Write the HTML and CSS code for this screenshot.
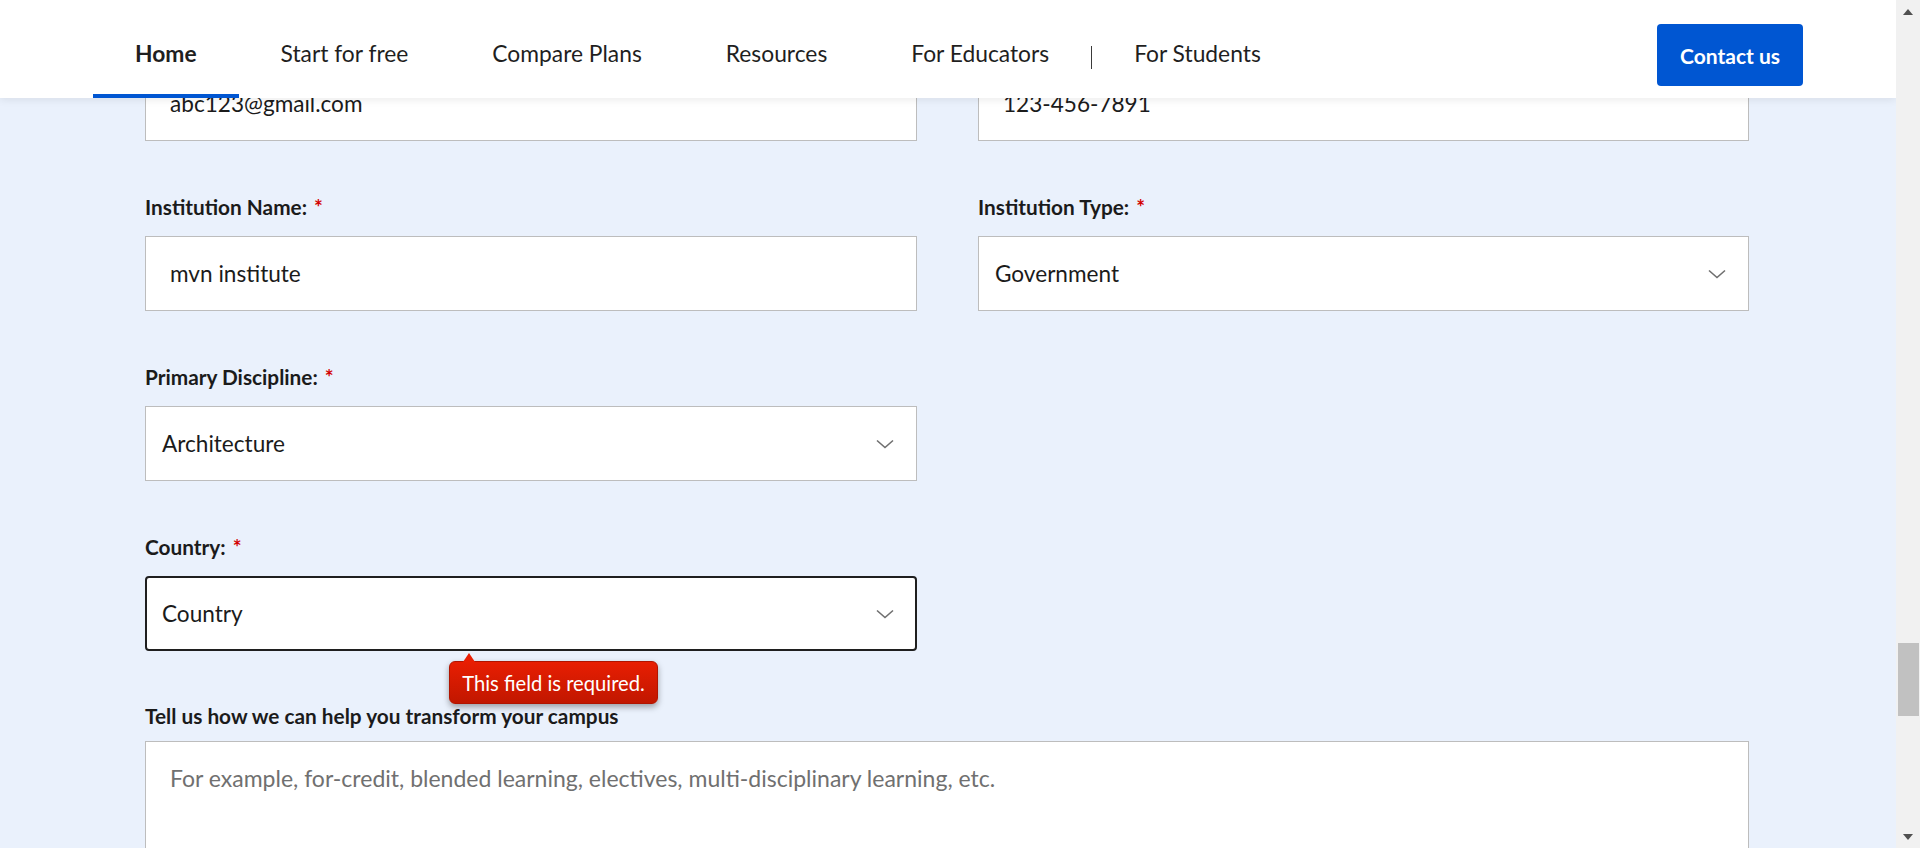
FILE: index.html
```html
<!DOCTYPE html>
<html lang="en">
<head>
<meta charset="utf-8">
<title>Contact us</title>
<link rel="stylesheet" href="styles.css">
</head>
<body>
<div class="page">
  <div class="viewport">
    <header class="topbar">
      <nav class="nav">
        <a class="nav-item active" href="#">Home</a>
        <a class="nav-item" href="#">Start for free</a>
        <a class="nav-item" href="#">Compare Plans</a>
        <a class="nav-item" href="#">Resources</a>
        <a class="nav-item" href="#">For Educators</a>
        <span class="nav-sep"></span>
        <a class="nav-item" href="#">For Students</a>
      </nav>
      <a class="btn-contact" href="#">Contact us</a>
    </header>

    <main class="content">
      <form class="form-grid">
        <div class="field">
          <div class="control text-control">abc123@gmail.com</div>
        </div>
        <div class="field">
          <div class="control text-control">123-456-7891</div>
        </div>

        <div class="field">
          <label class="label">Institution Name:<span class="req">*</span></label>
          <div class="control text-control">mvn institute</div>
        </div>
        <div class="field">
          <label class="label">Institution Type:<span class="req">*</span></label>
          <div class="control select-control">
            <span>Government</span>
            <svg class="chevron" viewBox="0 0 18 10" width="18" height="10"><path d="M1 1.5 L9 8.5 L17 1.5" fill="none" stroke="#6f6f6f" stroke-width="1.6"/></svg>
          </div>
        </div>

        <div class="field col-1">
          <label class="label">Primary Discipline:<span class="req">*</span></label>
          <div class="control select-control">
            <span>Architecture</span>
            <svg class="chevron" viewBox="0 0 18 10" width="18" height="10"><path d="M1 1.5 L9 8.5 L17 1.5" fill="none" stroke="#6f6f6f" stroke-width="1.6"/></svg>
          </div>
        </div>

        <div class="field col-1 field-country">
          <label class="label">Country:<span class="req">*</span></label>
          <div class="control select-control focused">
            <span>Country</span>
            <svg class="chevron" viewBox="0 0 18 10" width="18" height="10"><path d="M1 1.5 L9 8.5 L17 1.5" fill="none" stroke="#6f6f6f" stroke-width="1.6"/></svg>
          </div>
          <div class="error-tip">This field is required.</div>
        </div>

        <div class="field span-2 field-message">
          <label class="label">Tell us how we can help you transform your campus</label>
          <div class="control textarea-control">
            <span class="placeholder">For example, for-credit, blended learning, electives, multi-disciplinary learning, etc.</span>
          </div>
        </div>
      </form>
    </main>
  </div>

  <div class="scrollbar">
    <div class="sb-arrow sb-up"></div>
    <div class="sb-track"><div class="sb-thumb"></div></div>
    <div class="sb-arrow sb-down"></div>
  </div>
</div>
</body>
</html>
```

FILE: styles.css
```css
* { box-sizing: border-box; }

html, body {
  margin: 0;
  padding: 0;
  height: 848px;
  overflow: hidden;
}

body {
  font-family: Lato, "Noto Sans", sans-serif;
  color: #1f1f1f;
  background: #eaf1fc;
}

.page {
  display: flex;
  width: 1920px;
  height: 848px;
}

.viewport {
  position: relative;
  flex: 1;
  height: 848px;
  overflow: hidden;
  background: #eaf1fc;
}

/* ---------- header ---------- */
.topbar {
  position: absolute;
  top: 0;
  left: 0;
  right: 0;
  height: 98px;
  background: #ffffff;
  box-shadow: 0 2px 8px rgba(0, 0, 0, 0.08);
  display: flex;
  align-items: center;
  z-index: 5;
}

.nav {
  display: flex;
  align-self: stretch;
  align-items: center;
  padding-left: 93px;
}

.nav-item {
  height: 98px;
  display: flex;
  align-items: center;
  padding: 12px 42px 0;
  border-bottom: 4px solid transparent;
  font-size: 22.8px;
  color: #1f1f1f;
  text-decoration: none;
  white-space: nowrap;
}

.nav-item.active {
  font-weight: 700;
  border-bottom-color: #0056d2;
}

.nav-sep {
  width: 1px;
  height: 23px;
  margin-top: 16px;
  background: #3a3a3a;
}

.btn-contact {
  margin-left: auto;
  margin-right: 93px;
  margin-top: 12px;
  width: 146px;
  height: 62px;
  display: flex;
  align-items: center;
  justify-content: center;
  background: #0056d2;
  color: #ffffff;
  border-radius: 4px;
  font-size: 21px;
  font-weight: 700;
  text-decoration: none;
}

/* ---------- form ---------- */
.content {
  padding-top: 66px;
  padding-left: 145px;
}

.form-grid {
  width: 1604px;
  display: grid;
  grid-template-columns: 772px 771px;
  column-gap: 61px;
  row-gap: 54px;
}

.col-1 { grid-column: 1; }
.span-2 { grid-column: 1 / span 2; }

.field {
  position: relative;
  display: flex;
  flex-direction: column;
}

.label {
  display: block;
  height: 24px;
  line-height: 24px;
  margin-bottom: 17px;
  font-size: 20.8px;
  font-weight: 700;
  color: #1b1b1b;
  white-space: nowrap;
}

.req {
  color: #d30000;
  margin-left: 7px;
}

.control {
  height: 75px;
  background: #ffffff;
  border: 1px solid #bdbdbd;
  display: flex;
  align-items: center;
  font-size: 22.6px;
  color: #1b1b1b;
}

.text-control {
  padding-left: 24px;
}

.select-control {
  padding-left: 16px;
  padding-right: 22px;
  justify-content: space-between;
}

.select-control.focused {
  border: 2px solid #1f1f1f;
  border-radius: 4px;
  padding-left: 15px;
  padding-right: 21px;
}

.chevron {
  display: block;
}

.field-message {
  margin-top: -1px;
}

.field-message .label {
  margin-bottom: 13px;
}

.textarea-control {
  height: 160px;
  align-items: flex-start;
  padding: 22px 24px;
}

.placeholder {
  color: #707070;
  font-size: 23px;
  line-height: 28px;
}

/* ---------- error tooltip ---------- */
.error-tip {
  position: absolute;
  left: 304px;
  top: 126px;
  width: 209px;
  height: 43px;
  display: flex;
  align-items: center;
  justify-content: center;
  background: linear-gradient(#e81e02, #c11700);
  border: 1px solid #b01400;
  border-radius: 6px;
  box-shadow: 0 3px 6px rgba(0, 0, 0, 0.35);
  color: #ffffff;
  font-size: 20.2px;
  white-space: nowrap;
  z-index: 3;
}

.error-tip::before {
  content: "";
  position: absolute;
  left: 13px;
  top: -9px;
  width: 0;
  height: 0;
  border-left: 6px solid transparent;
  border-right: 6px solid transparent;
  border-bottom: 9px solid #e81e02;
}

/* ---------- scrollbar ---------- */
.scrollbar {
  width: 24px;
  height: 848px;
  background: #f1f1f1;
  display: flex;
  flex-direction: column;
  align-items: center;
}

.sb-arrow {
  width: 0;
  height: 0;
  border-left: 5px solid transparent;
  border-right: 5px solid transparent;
}

.sb-up {
  margin-top: 9px;
  border-bottom: 6px solid #505050;
}

.sb-down {
  margin-bottom: 8px;
  border-top: 6px solid #505050;
}

.sb-track {
  flex: 1;
  width: 100%;
  padding-top: 628px;
  display: flex;
  justify-content: center;
}

.sb-thumb {
  width: 21px;
  height: 73px;
  background: #c1c1c1;
  margin-left: 1px;
}
```
